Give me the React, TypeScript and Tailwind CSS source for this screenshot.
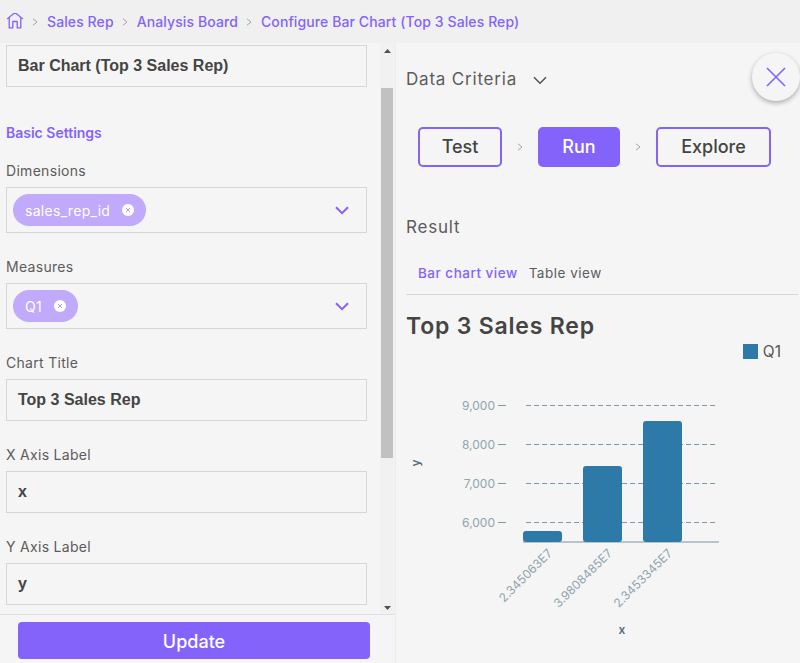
import React from 'react';

const FONT = "font-['Inter','Noto_Sans',sans-serif]";
const BOLD_INPUT = "font-['Liberation_Sans',Arial,sans-serif] font-bold text-[16px] text-[#444444]";

const Crumb = () => (
  <svg width="6" height="8" viewBox="0 0 6 8" fill="none" stroke="#a3a3a3" strokeWidth="1">
    <path d="M1 0.8 L5 4 L1 7.2" />
  </svg>
);

const HomeIcon = () => (
  <svg width="18" height="18" viewBox="0 1.5 18 18" fill="none" stroke="#8463fb" strokeWidth="1.3">
    <path d="M1.2 7.6 L9 1 L16.8 7.6" strokeLinejoin="round" />
    <path d="M3.2 6.2 V16.4 H6.8 V10 H11.2 V16.4 H14.8 V6.2" strokeLinejoin="round" />
  </svg>
);

const Chevron = ({ color, width = 2 }: { color: string; width?: number }) => (
  <svg width="14" height="9" viewBox="0 0 14 9" fill="none" stroke={color} strokeWidth={width}>
    <path d="M1 1.2 L7 7.2 L13 1.2" />
  </svg>
);

const Chip = ({ text }: { text: string }) => (
  <span className="flex h-[32px] items-center gap-[12px] rounded-full bg-[#c1a9fb] pl-[12px] pr-[12px] text-[14px] tracking-[0.3px] text-white">
    {text}
    <svg width="12" height="12" viewBox="0 0 12 12">
      <circle cx="6" cy="6" r="6" fill="#ffffff" />
      <path d="M4 4 L8 8 M8 4 L4 8" stroke="#b39af5" strokeWidth="1" />
    </svg>
  </span>
);

const Label = ({ text, className = '' }: { text: string; className?: string }) => (
  <div className={`h-[16px] text-[14px] leading-[16px] tracking-[0.3px] text-[#5c5c5c] ${className}`}>{text}</div>
);

const TextBox = ({ value, className = '' }: { value: string; className?: string }) => (
  <div className={`flex h-[42px] items-center border border-[#d6d6d6] pl-[11px] ${BOLD_INPUT} ${className}`}>{value}</div>
);

const SelectBox = ({ chip }: { chip: string }) => (
  <div className="mt-[8px] flex h-[46px] items-center justify-between border border-[#d6d6d6] pl-[6px] pr-[17px]">
    <Chip text={chip} />
    <Chevron color="#8463fb" />
  </div>
);

const StepButton = ({ text, className }: { text: string; className: string }) => (
  <div className={`flex h-[40px] items-center justify-center rounded-[5px] border-2 border-[#8463fb] pb-[1px] text-[18px] font-medium ${className}`}>
    {text}
  </div>
);

const bars = [
  { x: 523, y: 531, label: '2.345063E7', lx: 553, ly: 554 },
  { x: 583, y: 466, label: '3.9808485E7', lx: 613, ly: 554 },
  { x: 643, y: 421, label: '2.3453345E7', lx: 673, ly: 554 },
];

const BarChart = () => (
  <svg width="394" height="303" viewBox="406 360 394 303" className="block">
    {[405, 444, 483, 522].map((y, i) => (
      <g key={y}>
        <line x1="498" x2="506" y1={y + 0.5} y2={y + 0.5} stroke="#7f98a8" />
        <line x1="526" x2="716" y1={y + 0.5} y2={y + 0.5} stroke="#7f98a8" strokeDasharray="5 3" />
        <text x="495" y={y + 4.5} textAnchor="end" fontSize="12" fill="#90a4ae" fontFamily="Inter, sans-serif">
          {['9,000', '8,000', '7,000', '6,000'][i]}
        </text>
      </g>
    ))}
    <rect x="523" y="541" width="196" height="2" fill="#b7c4cb" />
    {bars.map((b) => (
      <rect key={b.x} x={b.x} y={b.y} width="39" height={542 - b.y} rx="3" fill="#2d79a8" />
    ))}
    {bars.map((b) => (
      <text
        key={b.label}
        x={b.lx}
        y={b.ly}
        textAnchor="end"
        fontSize="12"
        fill="#90a4ae"
        fontFamily="Inter, sans-serif"
        transform={`rotate(-45 ${b.lx} ${b.ly})`}
      >
        {b.label}
      </text>
    ))}
    <text x="622" y="634" textAnchor="middle" fontSize="12" fontWeight="600" fill="#546e7a" fontFamily="Inter, sans-serif">
      x
    </text>
    <text x="0" y="0" textAnchor="middle" fontSize="12" fontWeight="600" fill="#546e7a" fontFamily="Inter, sans-serif" transform="translate(420 463) rotate(-90)">
      y
    </text>
  </svg>
);

export default function App() {
  return (
    <div className={`flex h-[663px] w-[800px] flex-col overflow-hidden bg-[#f5f5f5] ${FONT}`}>
      <header className="flex h-[43px] shrink-0 items-center gap-[8px] bg-[#f0f0f0] pl-[6px] text-[14px] font-medium tracking-[0.1px] text-[#8463fb]">
        <HomeIcon />
        <Crumb />
        <span className="ml-[1px]">Sales Rep</span>
        <Crumb />
        <span className="ml-[1px]">Analysis Board</span>
        <Crumb />
        <span className="ml-[1px]">Configure Bar Chart (Top 3 Sales Rep)</span>
      </header>

      <div className="flex min-h-0 flex-1">
        <aside className="flex w-[396px] shrink-0 flex-col border-r border-[#ececec]">
          <div className="flex h-[572px] border-b border-[#dedede]">
            <div className="w-[380px] overflow-hidden pl-[6px] pr-[13px] pt-[2px]">
              <TextBox value="Bar Chart (Top 3 Sales Rep)" />
              <div className="mt-[38px] h-[16px] text-[14px] font-semibold leading-[16px] text-[#8463fb]">Basic Settings</div>
              <Label text="Dimensions" className="mt-[22px]" />
              <SelectBox chip="sales_rep_id" />
              <Label text="Measures" className="mt-[26px]" />
              <SelectBox chip="Q1" />
              <Label text="Chart Title" className="mt-[26px]" />
              <TextBox value="Top 3 Sales Rep" className="mt-[8px]" />
              <Label text="X Axis Label" className="mt-[26px]" />
              <TextBox value="x" className="mt-[8px]" />
              <Label text="Y Axis Label" className="mt-[26px]" />
              <TextBox value="y" className="mt-[8px]" />
            </div>
            <div className="flex w-[15px] flex-col items-start bg-[#f1f1f1] pl-[1px]">
              <svg width="13" height="14" viewBox="0 0 13 14" className="mt-[5px]"><path d="M3 5 H10 L6.5 1 Z" fill="#505050" /></svg>
              <div className="mt-[26px] h-[370px] w-[12px] bg-[#c1c1c1]" />
              <svg width="13" height="8" viewBox="0 0 13 8" className="mt-auto mb-[2px]"><path d="M3 2 H10 L6.5 6 Z" fill="#505050" /></svg>
            </div>
          </div>
          <div className="flex flex-1 items-start pl-[18px] pt-[7px]">
            <div className="flex h-[37px] w-[352px] items-center justify-center rounded-[4px] bg-[#8463fb] pt-[2px] text-[18px] font-medium text-white">Update</div>
          </div>
        </aside>

        <main className="relative flex-1 pl-[10px]">
          <div className="flex h-[72px] items-center gap-[16px] pt-[2px] text-[17px] tracking-[0.8px] text-[#5c5c5c]">
            Data Criteria
            <Chevron color="#555555" width={1.6} />
          </div>
          <div className="absolute right-0 top-[10px] flex h-[48px] w-[48px] items-center justify-center rounded-full bg-[#f5f5f5] shadow-[0_2px_5px_rgba(0,0,0,0.3)]">
            <svg width="20" height="20" viewBox="0 0 20 20" stroke="#8463fb" strokeWidth="1.6">
              <path d="M1 1 L19 19 M19 1 L1 19" />
            </svg>
          </div>

          <div className="ml-[12px] mt-[12px] flex items-center">
            <StepButton text="Test" className="w-[84px] text-[#444444]" />
            <span className="ml-[15px] mr-[15px]"><Crumb /></span>
            <StepButton text="Run" className="w-[82px] bg-[#8463fb] text-white" />
            <span className="ml-[15px] mr-[15px]"><Crumb /></span>
            <StepButton text="Explore" className="w-[115px] text-[#444444]" />
          </div>

          <div className="mt-[50px] h-[20px] text-[17px] leading-[20px] tracking-[0.8px] text-[#5c5c5c]">Result</div>

          <div className="mt-[26px] flex h-[32px] w-[392px] items-start gap-[11px] border-b border-[#d6d6d6] pl-[12px] pt-[2px] text-[13.5px] leading-[16px] tracking-[0.5px]">
            <span className="font-medium text-[#8463fb]">Bar chart view</span>
            <span className="text-[#5c5c5c]">Table view</span>
          </div>

          <div className="mt-[17px] h-[28px] text-[23px] font-semibold leading-[28px] tracking-[0.8px] text-[#444444]">Top 3 Sales Rep</div>

          <div className="mt-[3px] flex h-[17px] items-center justify-end gap-[5px] pr-[19px] text-[15.5px] text-[#555555]">
            <span className="h-[15px] w-[15px] bg-[#2d79a8]" />
            Q1
          </div>
          <BarChart />
        </main>
      </div>
    </div>
  );
}
